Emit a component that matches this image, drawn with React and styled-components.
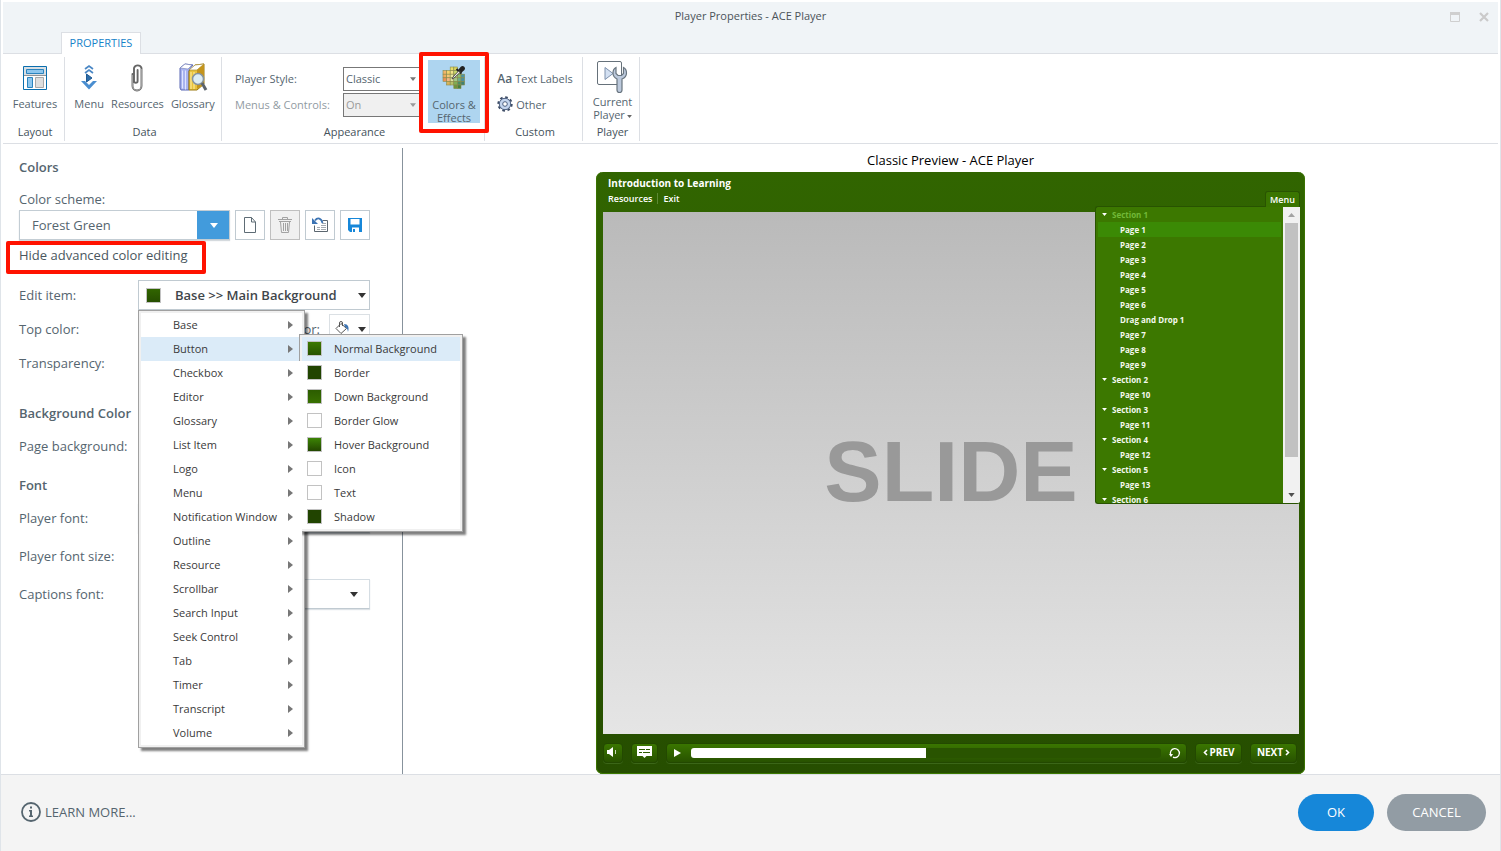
import React from "react";
import styled, { createGlobalStyle, css } from "styled-components";

const GlobalStyle = createGlobalStyle`
  * { box-sizing: border-box; }
  body { margin: 0; background: #fff; font-family: "Open Sans", "Noto Sans", sans-serif; }
  button, select, input { font: inherit; color: inherit; margin: 0; }
  button { cursor: pointer; padding: 0; border: 0; background: none; }
  ul { list-style: none; margin: 0; padding: 0; }
  svg { display: block; flex: none; }
`;

const line = "#dcdfe4";
const slate = "#55656f";

const Window = styled.div`
  min-height: 100vh;
  display: flex;
  flex-direction: column;
  border: solid #dfe4e9;
  border-width: 0 1px;
  color: ${slate};
  font-size: 13px;
`;

/* ---------- title bar and tabs ---------- */
const Header = styled.header`
  margin: 2px 2px 0;
  background: #f0f4f7;
  border-bottom: 1px solid ${line};
`;
const TitleBar = styled.div`
  display: grid;
  grid-template-columns: 1fr auto 1fr;
  align-items: center;
  height: 30px;
  padding: 0 9px;
`;
const WindowTitle = styled.h1`
  grid-column: 2;
  margin: 0;
  padding-bottom: 3px;
  font-size: 11px;
  font-weight: 400;
  color: #4b5359;
`;
const WindowButtons = styled.div`
  display: flex;
  justify-content: flex-end;
  gap: 19px;
`;
const Tabs = styled.nav`
  padding-left: 58px;
  display: flex;
`;
const Tab = styled.button`
  height: 22px;
  width: 80px;
  margin-bottom: -1px;
  padding-bottom: 2px;
  background: #fff;
  border: 1px solid ${line};
  border-bottom: 0;
  font-size: 11px;
  color: #1583c9;
`;

/* ---------- ribbon ---------- */
const Ribbon = styled.section`
  display: flex;
  margin: 0 2px;
  padding: 3px 0 2px;
  height: 90px;
  border-bottom: 1px solid ${line};
  font-size: 11px;
`;
const GroupBox = styled.div`
  display: flex;
  flex-direction: column;
  width: ${(p) => p.$width}px;
  padding-left: 3px;
  border-right: 1px solid ${line};
`;
const GroupTools = styled.div`
  flex: 1;
  display: flex;
  justify-content: ${(p) => p.$align || "center"};
  gap: ${(p) => p.$gap || 0}px;
  padding-top: 4px;
`;
const GroupName = styled.div`
  height: 18px;
  line-height: 18px;
  text-align: center;
  color: #45525b;
`;
const Tool = styled.button`
  display: flex;
  flex-direction: column;
  align-items: center;
  justify-content: flex-start;
  gap: ${(p) => (p.$twoLine ? 0 : 2)}px;
  padding: 0 2px;
  line-height: ${(p) => (p.$twoLine ? 13 : 18)}px;
`;
const ColorsTool = styled(Tool)`
  width: 52px;
  height: 63px;
  background: #aed5f0;
  line-height: 13px;
`;
const RedBox = styled.div`
  position: absolute;
  border: 4px solid #ff1200;
  border-radius: 2px;
  pointer-events: none;
`;
const ColorsSlot = styled.div`
  position: relative;
  z-index: 1;
  width: 64px;
  margin: -4px 0 0 -1px;
  padding: 3px 0 0 8px;
  ${RedBox} { left: -1px; top: -5px; width: 70px; height: 81px; }
`;
const StyleGrid = styled.div`
  display: grid;
  grid-template-columns: 108px 78px;
  grid-auto-rows: 24px;
  row-gap: 2px;
  padding-top: 6px;
  align-items: center;
`;
const StyleLabel = styled.label`
  padding-bottom: 1px;
  opacity: ${(p) => (p.$dim ? 0.65 : 1)};
`;
const RibbonSelect = styled.select`
  appearance: none;
  width: 100%;
  height: 24px;
  padding: 0 2px 1px;
  border: 1px solid #777;
  border-radius: 0;
  background: #fff;
  opacity: 1;
  &:disabled { background: #f0f0f0; color: #9a9a9a; }
`;
const SelectWrap = styled.div`
  position: relative;
  width: ${(p) => p.$width || "100%"};
  > svg { position: absolute; right: ${(p) => p.$inset || 5}px; top: calc(50% - 2px); pointer-events: none; }
`;
const CustomTools = styled.div`
  display: flex;
  flex-direction: column;
  padding-top: 7px;
  gap: 6px;
`;
const InlineTool = styled.button`
  display: flex;
  align-items: center;
  gap: 3px;
  height: 20px;
`;
const Aa = styled.b`
  font-size: 12px;
  font-weight: 600;
`;
const WithCaret = styled.span`
  display: flex;
  align-items: center;
  gap: 2px;
  > svg { margin-top: 4px; }
`;

/* ---------- main area ---------- */
const Main = styled.main`
  flex: 1;
  display: flex;
`;
const Side = styled.section`
  width: 402px;
  flex: none;
  margin-top: 4px;
  padding: 9px 32px 0 18px;
  border-right: 1px solid #87929c;
`;
const Heading = styled.h2`
  margin: 0;
  height: 20px;
  line-height: 20px;
  font-size: 13px;
  font-weight: 600;
  margin-bottom: ${(p) => p.$after}px;
`;
const FieldLabel = styled.label`
  display: block;
  height: 21px;
  line-height: 20px;
`;
const SchemeRow = styled.div`
  display: flex;
  gap: 5px;
`;
const SchemeSelect = styled.select`
  appearance: none;
  width: 100%;
  height: 30px;
  padding: 0 12px;
  border: 1px solid #c3cdd4;
  border-radius: 0;
  background: linear-gradient(to right, transparent calc(100% - 32px), #429bdc calc(100% - 32px)) #fff;
  box-shadow: 0 1px 1px #d5dade;
`;
const SquareButton = styled.button`
  width: 30px;
  height: 30px;
  display: grid;
  place-items: center;
  border: 1px solid #c0cad1;
  background: #fff;
  &:disabled { background: #f0f0f0; border-color: #bfbfbf; }
`;
const LinkBox = styled.div`
  position: relative;
  height: 30px;
  line-height: 30px;
  margin-bottom: 10px;
  ${RedBox} { left: -13px; top: 1px; width: 200px; height: 33px; }
  a { color: #4a565e; text-decoration: none; }
`;
const Row = styled.div`
  position: relative;
  display: flex;
  align-items: center;
  height: 30px;
  margin-bottom: ${(p) => p.$after || 4}px;
`;
const RowLabel = styled.label`
  width: 119px;
  flex: none;
`;
const ItemButton = styled.button`
  flex: 1;
  height: 30px;
  display: flex;
  align-items: center;
  gap: 14px;
  padding: 0 3px 0 7px;
  border: 1px solid #c0cad1;
  background: #fff;
  color: #3f464b;
  font-weight: 600;
  > svg { margin-left: auto; }
`;
const Swatch = styled.span`
  width: 15px;
  height: 15px;
  flex: none;
  border: 1px solid #c2c2c2;
  background: ${(p) => p.$fill};
`;
const FillButton = styled.button`
  width: 41px;
  height: 30px;
  display: flex;
  align-items: center;
  gap: 7px;
  padding-left: 3px;
  border: 1px solid #dbe0e4;
  background: #fff;
`;
const EndLabel = styled.label`
  margin: 0 9px 0 auto;
`;
const Field = styled.input`
  width: ${(p) => p.$width}px;
  height: 30px;
  border: 1px solid #dbe0e4;
  background: #fff;
`;
const FontSelect = styled.select`
  appearance: none;
  width: 100%;
  height: 30px;
  border: 1px solid #d5dde3;
  border-bottom-color: #c0cad1;
  border-radius: 0;
  background: #fff;
  box-shadow: 0 1px 1px #dde2e6;
`;

/* ---------- menus ---------- */
const menuBox = css`
  position: absolute;
  padding: 2px;
  border: 1px solid #a0a0a0;
  background: #f0f0f0;
  box-shadow: 3px 3px 2px rgba(0, 0, 0, 0.5);
`;
const Menu = styled.ul`
  ${menuBox}
  left: 119px;
  top: 30px;
  width: 167px;
  z-index: 3;
`;
const SubMenu = styled.ul`
  ${menuBox}
  left: calc(100% - 3px);
  top: -3px;
  width: 164px;
`;
const MenuItem = styled.li`
  position: relative;
  background: ${(p) => (p.$active ? "#dbebf8" : "#fff")};
`;
const MenuButton = styled.button`
  width: 100%;
  height: 24px;
  display: flex;
  align-items: center;
  padding: 0 9px 1px ${(p) => (p.$swatch ? 5 : 32)}px;
  gap: 12px;
  font-size: 11px;
  color: #3a3a3a;
  white-space: nowrap;
  > svg { margin-left: auto; }
`;
const MenuText = styled.span`
  margin-right: ${(p) => (p.$tight ? -8 : 0)}px;
`;

/* ---------- preview ---------- */
const Preview = styled.section`
  flex: 1;
  display: flex;
  flex-direction: column;
  align-items: center;
  padding: 6px 2px 0 0;
`;
const PreviewTitle = styled.h2`
  margin: 0;
  height: 22px;
  line-height: 20px;
  font-size: 13px;
  font-weight: 400;
  color: #000;
`;
const Player = styled.div`
  position: relative;
  width: 100%;
  max-width: 709px;
  flex: 1;
  display: flex;
  flex-direction: column;
  padding: 0 6px 0 7px;
  border-radius: 7px;
  background: linear-gradient(#316500, #264e00);
  box-shadow: inset 0 -1px 0 #3c7900, inset 1px 0 0 #3a7200, inset -1px 0 0 #3a7200;
  color: #fff;
  font-weight: 600;
  font-size: 9px;
`;
const PlayerTop = styled.div`
  height: 40px;
  padding: 4px 5px;
`;
const CourseTitle = styled.div`
  font-size: 10px;
  font-weight: 700;
  line-height: 15px;
`;
const TopLinks = styled.div`
  display: flex;
  line-height: 15px;
  button + button { margin-left: 5px; padding-left: 5px; border-left: 1px solid #5d8a35; line-height: 11px; height: 11px; margin-top: 2px; }
`;
const Slide = styled.div`
  flex: 1;
  display: grid;
  place-items: center;
  padding-bottom: 4px;
  background: linear-gradient(#bababa, #e5e5e5);
  color: #999;
  font: 700 86px/1 "Liberation Sans", Arial, sans-serif;
`;
const Controls = styled.div`
  height: 40px;
  display: flex;
  align-items: center;
  gap: 8px;
  padding: 0 2px 2px 0;
`;
const controlSkin = css`
  height: 20px;
  border-radius: 4px;
  border: 1px solid #234900;
  background: linear-gradient(#3a7600, #285200);
  box-shadow: 0 1px 0 #3b6618;
`;
const ControlButton = styled.button`
  ${controlSkin}
  width: ${(p) => p.$width}px;
  display: flex;
  align-items: center;
  justify-content: center;
  gap: 2px;
  padding-bottom: 2px;
  font-size: 10px;
  font-weight: 700;
`;
const SeekGroup = styled.div`
  ${controlSkin}
  flex: 1;
  display: flex;
  align-items: center;
  padding: 0 5px;
  gap: 8px;
`;
const Seek = styled.input`
  appearance: none;
  flex: 1;
  min-width: 0;
  height: 10px;
  border-radius: 3px;
  background: linear-gradient(to right, #fff 50%, #295400 50%);
  &::-webkit-slider-thumb { appearance: none; width: 1px; height: 10px; }
`;
const MenuDock = styled.div`
  position: absolute;
  top: 19px;
  right: 5px;
  width: 205px;
  display: flex;
  flex-direction: column;
  align-items: flex-end;
`;
const MenuTab = styled.button`
  width: 35px;
  height: 16px;
  margin-bottom: -1px;
  line-height: 13px;
  z-index: 1;
  background: #3a7500;
  border: 1px solid #295400;
  border-bottom: 0;
  border-radius: 3px 3px 0 0;
`;
const Outline = styled.div`
  width: 100%;
  height: 298px;
  display: flex;
  overflow: hidden;
  background: #3c7800;
  border: 1px solid #285300;
  border-right: 0;
  border-radius: 3px 0 3px 3px;
  font-size: 8px;
  font-weight: 700;
`;
const OutlineList = styled.ul`
  flex: 1;
  padding: 0 2px 0 2px;
`;
const OutlineRow = styled.li`
  display: flex;
  align-items: center;
  gap: 5px;
  height: 15px;
  padding: 0 0 1px ${(p) => (p.$page ? 22 : 4)}px;
  background: ${(p) => (p.$current ? "#3b8a05" : "none")};
  color: ${(p) => (p.$seen ? "#72b838" : "#f4f8ef")};
`;
const ScrollBar = styled.div`
  width: 17px;
  display: flex;
  flex-direction: column;
  align-items: center;
  background: #f1f1f1;
  padding: 6px 0;
`;
const ScrollThumb = styled.div`
  width: 13px;
  height: 234px;
  margin: 6px 0 auto;
  background: #c1c1c1;
`;

/* ---------- footer ---------- */
const Footer = styled.footer`
  height: 77px;
  display: flex;
  align-items: center;
  gap: 13px;
  padding: 0 14px 2px 20px;
  border-top: 1px solid ${line};
  background: #f4f4f4;
`;
const LearnMore = styled.a`
  display: flex;
  align-items: center;
  gap: 4px;
  margin-right: auto;
  color: ${slate};
  text-decoration: none;
`;
const Pill = styled.button`
  width: ${(p) => p.$width}px;
  height: 37px;
  border-radius: 19px;
  background: ${(p) => (p.$primary ? "#1687d9" : "#929ca4")};
  color: #fff;
`;

/* ---------- drawings ---------- */
const Down = ({ w = 8, h = 5, color = "#333" }) => (
  <svg width={w} height={h} viewBox="0 0 8 5"><path d="M0 0h8L4 5z" fill={color} /></svg>
);
const Right = () => (
  <svg width="5" height="8" viewBox="0 0 5 8"><path d="M0 0l5 4-5 4z" fill="#777" /></svg>
);
const FeaturesIcon = () => (
  <svg width="32" height="32" viewBox="0 0 32 32">
    <path d="M4.500 5.500h23v23h-23z" fill="#fff" stroke="#0a6eae" />
    <path d="M5 6h22v8H5z" fill="#d9dfe4" />
    <path d="M7.500 8.500h17v4h-17zM8.500 16.500h5v10h-5z" fill="#8dc6ee" stroke="#2b84be" />
    <path d="M16.500 16.500h8v10h-8z" fill="#dedede" stroke="#a9a9a9" />
    <path d="M5 14.500h22" stroke="#8d9398" />
  </svg>
);
const MenuIcon = () => (
  <svg width="30" height="32" viewBox="0 0 30 32" fill="none">
    <path d="M11 8l4-3 4 3M11 12l4-3 4 3" stroke="#4a87c5" strokeWidth="1.700" />
    <path d="M12.500 13v8L18 17z" fill="#2e6da8" stroke="#1f5a94" />
    <path d="M7 20h4l4 4 4-4h4l-8 8.500z" fill="#4a8ed0" />
  </svg>
);
const ClipIcon = () => (
  <svg width="30" height="32" viewBox="0 0 30 32" fill="none">
    <path d="M10.500 13v12a4.500 4.500 0 0 0 9 0V7a4 4 0 0 0-7.500 0v13a1.800 1.800 0 0 0 3.600 0V9" stroke="#666" strokeWidth="1.900" strokeLinecap="round" />
    <path d="M10.500 14v11a4.500 4.500 0 0 0 9 0V8" stroke="#b5b5b5" strokeWidth="0.700" />
  </svg>
);
const GlossaryIcon = () => (
  <svg width="32" height="32" viewBox="0 0 32 32">
    <path d="M3 7l5-4 8 1-4 5v20H4l-1-2z" fill="#a9b4f0" stroke="#5b69b5" />
    <path d="M3 7l5-4 7 1-4 4z" fill="#fff" stroke="#8089bd" strokeWidth=".7" />
    <path d="M5.500 9.500v18M8.500 9.500v19" stroke="#dfe4ff" />
    <path d="M12 10l6-6 9-1v20l-7 6h-8z" fill="#e8c23c" stroke="#9b7a12" />
    <path d="M12 9l6-5 9-1-7 6z" fill="#fff" stroke="#a7903d" strokeWidth=".7" />
    <path d="M14 11v17M17 11v17" stroke="#fff0a8" />
    <path d="M20 9l7-6v20l-7 5z" fill="#c4941c" />
    <circle cx="21" cy="18" r="5.500" fill="#dcedf6" stroke="#87949e" strokeWidth="1.500" />
    <path d="M25 22l4 7" stroke="#5b636b" strokeWidth="3" />
  </svg>
);
const PALETTE = [
  [2, 0, "#e7df69"], [3, 0, "#d7d45c"],
  [1, 1, "#f4d36c"], [2, 1, "#f1e38a"], [3, 1, "#c9d96b"], [4, 1, "#a8cb68"],
  [0, 1, "#f2b56c"], [0, 2, "#f2ac5c"], [1, 2, "#f5c777"], [2, 2, "#e9e8a0"], [3, 2, "#b4d581"], [4, 2, "#8dbf70"], [5, 2, "#4a93a5"],
  [0, 3, "#ed9158"], [1, 3, "#f3b785"], [2, 3, "#dfe0a3"], [3, 3, "#a1c987"], [4, 3, "#6cae8b"], [5, 3, "#4a8fa0"],
  [1, 4, "#d7b35b"], [2, 4, "#b9c26a"], [3, 4, "#7fae55"], [4, 4, "#4c8f62"], [5, 4, "#3f8072"],
  [3, 5, "#6b963b"], [4, 5, "#47803c"],
];
const PaletteIcon = () => (
  <svg width="32" height="36" viewBox="0 0 32 36">
    {PALETTE.map(([x, y, c]) => (
      <rect key={`${x}-${y}`} x={5 + x * 3.6} y={7 + y * 3.6} width="3.600" height="3.600" fill={c} stroke="#8a8a4a" strokeWidth=".6" />
    ))}
    <path d="M23 6.500a2.500 2.500 0 0 1 3.500 3.500l-3 2.500-3-3z" fill="#222" />
    <path d="M18.500 9l5 4.500" stroke="#222" strokeWidth="2" />
    <path d="M20.500 11l-5.500 6-1 2 2-1 6-5.500z" fill="#eee" stroke="#444" strokeWidth=".9" />
  </svg>
);
const GearIcon = () => (
  <svg width="16" height="16" viewBox="0 0 16 16">
    <circle cx="8" cy="8" r="6.700" fill="none" stroke="#3e4d66" strokeWidth="2" strokeDasharray="2.630 2.630" />
    <circle cx="8" cy="8" r="5.700" fill="#c3d4ee" stroke="#4c5f80" />
    <circle cx="8" cy="8" r="2.300" fill="#fff" stroke="#4c5f80" />
  </svg>
);
const WrenchIcon = () => (
  <svg width="34" height="34" viewBox="0 0 34 34">
    <path d="M4 0.500h21a1.500 1.500 0 0 1 1.500 1.500v20a1.500 1.500 0 0 1-1.500 1.500H4a1.500 1.500 0 0 1-1.500-1.500V2A1.500 1.500 0 0 1 4 .500z" fill="#fff" stroke="#66717a" />
    <path d="M10 6.500v12l8-6z" fill="#d3e0f2" stroke="#7e91ac" />
    <path d="M21 6.500c-2 1-3 3-3 5.500 0 3 2 5 4 6v11a2.500 2.500 0 0 0 5 0V18c2.500-1 4.500-3 4.500-6 0-2.500-1-4.500-3-5.500v6l-2 2h-3.500l-2-2z" fill="#bcc9dc" stroke="#69757f" strokeWidth="1.200" />
  </svg>
);
const PageIcon = () => (
  <svg width="14" height="18" viewBox="0 0 14 18"><path d="M1.500 1.500h7L12.500 6v10.500h-11z M8.500 1.500V6h4" fill="none" stroke="#5e6c75" /></svg>
);
const TrashIcon = () => (
  <svg width="16" height="18" viewBox="0 0 16 18" fill="none" stroke="#a2a2a2">
    <path d="M1 3.500h14M5.500 3V1.500h5V3M3.500 6l1 10.500h7l1-10.500M2 5.500h12M6.500 7v8M8.500 7v8M10.500 7v8" />
  </svg>
);
const ResetIcon = () => (
  <svg width="18" height="18" viewBox="0 0 18 18" fill="none">
    <path d="M3.500 9.500v6h13V4.500h-5" stroke="#5b666f" />
    <path d="M6 13.500h3M11 7.500h4M10 9.500h5M10 11.500h5M6 11.500h3M10 13.500h5" stroke="#a4aab0" />
    <path d="M11.500 7C10.500 2 6.500 1 4 4.500" stroke="#3c74b4" strokeWidth="1.800" />
    <path d="M1 2v6h6z" fill="#3c74b4" />
  </svg>
);
const SaveIcon = () => (
  <svg width="16" height="16" viewBox="0 0 16 16"><path d="M1 1h14v14H3l-2-2z" fill="#1687d9" /><path d="M3.500 2h9v5.500h-9zM5 10.500h7V15H5z" fill="#fff" /><path d="M6 12h2v3H6z" fill="#1687d9" /></svg>
);
const BucketIcon = () => (
  <svg width="18" height="18" viewBox="0 0 18 18">
    <path d="M3 8.500l5-5 5.500 5-5.500 5zM6.500 7V3a1.500 1.500 0 0 1 3 0v3" fill="#fff" stroke="#555" />
    <path d="M11 4c4 0 5.500 3 4 8-.5-3-1-4-3-5z" fill="#3c74b4" />
    <path d="M1 15h15v2H1z" fill="#2d6200" />
  </svg>
);
const InfoIcon = () => (
  <svg width="20" height="20" viewBox="0 0 20 20">
    <circle cx="10" cy="10" r="9" fill="none" stroke={slate} strokeWidth="1.800" />
    <path d="M9 4.500h2v2H9zM8 8h3v5.500h1V15H8v-1.500h1v-4H8z" fill={slate} />
  </svg>
);
const VolumeIcon = () => (
  <svg width="12" height="12" viewBox="0 0 12 12"><path d="M0 4h2l4-3v10L2 8H0z" fill="#fff" /><path d="M8.500 4v4" stroke="#c8d8b8" /></svg>
);
const CaptionIcon = () => (
  <svg width="15" height="12" viewBox="0 0 15 12"><path d="M0 0h15v10h-5.500l-2 2-2-2H0z" fill="#fff" /><path d="M2 3.500h6M9 3.500h4M2 6.500h3M6 6.500h7" stroke="#2d5b00" /></svg>
);
const PlayIcon = () => (
  <svg width="11" height="10" viewBox="0 0 11 10"><path d="M2 1l7 4-7 4z" fill="#fff" /></svg>
);
const ReplayIcon = () => (
  <svg width="12" height="12" viewBox="0 0 12 12" fill="none">
    <path d="M1.800 8A4.500 4.500 0 1 1 4 10.200" stroke="#fff" strokeWidth="1.300" /><path d="M0 7h4L2 10z" fill="#fff" />
  </svg>
);
const Chevron = ({ back }) => (
  <svg width="5" height="7" viewBox="0 0 5 7" fill="none"><path d={back ? "M4 1L1.500 3.500 4 6" : "M1 1l2.500 2.500L1 6"} stroke="#fff" strokeWidth="1.600" /></svg>
);
const MaximizeIcon = () => (
  <svg width="10" height="10" viewBox="0 0 10 10"><path d="M.5.500h9v9h-9z" fill="none" stroke="#cfcfcf" /><path d="M0 0h10v3H0z" fill="#cfcfcf" /></svg>
);
const CloseIcon = () => (
  <svg width="10" height="10" viewBox="0 0 10 10"><path d="M1 1l8 8M9 1L1 9" stroke="#cacaca" strokeWidth="2.200" /></svg>
);

/* ---------- content ---------- */
const MENU = ["Base", "Button", "Checkbox", "Editor", "Glossary", "List Item", "Logo", "Menu", "Notification Window", "Outline", "Resource", "Scrollbar", "Search Input", "Seek Control", "Tab", "Timer", "Transcript", "Volume"];
const SUBMENU = [
  ["Normal Background", "linear-gradient(#3c7900, #285300)"],
  ["Border", "#214400"],
  ["Down Background", "linear-gradient(#2c5d00, #387000)"],
  ["Border Glow", "#fff"],
  ["Hover Background", "linear-gradient(#3c8405, #234700)"],
  ["Icon", "#fff"],
  ["Text", "#fff"],
  ["Shadow", "#214400"],
];
const OUTLINE = ["Section 1", "Page 1", "Page 2", "Page 3", "Page 4", "Page 5", "Page 6", "Drag and Drop 1", "Page 7", "Page 8", "Page 9", "Section 2", "Page 10", "Section 3", "Page 11", "Section 4", "Page 12", "Section 5", "Page 13", "Section 6"];

const Group = ({ name, width, gap, align, children }) => (
  <GroupBox $width={width}>
    <GroupTools $gap={gap} $align={align}>{children}</GroupTools>
    <GroupName>{name}</GroupName>
  </GroupBox>
);

const EditMenu = () => (
  <Menu role="menu">
    {MENU.map((name) => (
      <MenuItem key={name} $active={name === "Button"} role="none">
        <MenuButton role="menuitem"><MenuText $tight>{name}</MenuText><Right /></MenuButton>
        {name === "Button" && (
          <SubMenu role="menu">
            {SUBMENU.map(([label, fill], i) => (
              <MenuItem key={label} $active={i === 0} role="none">
                <MenuButton role="menuitem" $swatch><Swatch $fill={fill} /><MenuText>{label}</MenuText></MenuButton>
              </MenuItem>
            ))}
          </SubMenu>
        )}
      </MenuItem>
    ))}
  </Menu>
);

export default function App() {
  return (
    <Window>
      <GlobalStyle />
      <Header>
        <TitleBar>
          <WindowTitle>Player Properties - ACE Player</WindowTitle>
          <WindowButtons>
            <button aria-label="Maximize"><MaximizeIcon /></button>
            <button aria-label="Close"><CloseIcon /></button>
          </WindowButtons>
        </TitleBar>
        <Tabs><Tab>PROPERTIES</Tab></Tabs>
      </Header>

      <Ribbon>
        <Group name="Layout" width={62}>
          <Tool><FeaturesIcon />Features</Tool>
        </Group>
        <Group name="Data" width={157} gap={3}>
          <Tool><MenuIcon />Menu</Tool>
          <Tool><ClipIcon />Resources</Tool>
          <Tool><GlossaryIcon />Glossary</Tool>
        </Group>
        <Group name="Appearance" width={263} align="flex-end">
          <StyleGrid>
            <StyleLabel htmlFor="player-style">Player Style:</StyleLabel>
            <SelectWrap>
              <RibbonSelect id="player-style"><option>Classic</option></RibbonSelect>
              <Down w={6} h={4} color="#777" />
            </SelectWrap>
            <StyleLabel htmlFor="menus-controls" $dim>Menus &amp; Controls:</StyleLabel>
            <SelectWrap>
              <RibbonSelect id="menus-controls" disabled><option>On</option></RibbonSelect>
              <Down w={6} h={4} color="#999" />
            </SelectWrap>
          </StyleGrid>
          <ColorsSlot>
            <ColorsTool><PaletteIcon /><span>Colors &amp;<br />Effects</span></ColorsTool>
            <RedBox />
          </ColorsSlot>
        </Group>
        <Group name="Custom" width={98}>
          <CustomTools>
            <InlineTool><Aa>Aa</Aa>Text Labels</InlineTool>
            <InlineTool><GearIcon />Other</InlineTool>
          </CustomTools>
        </Group>
        <Group name="Player" width={57}>
          <Tool $twoLine><WrenchIcon />Current<WithCaret>Player<Down w={5} h={3} color="#666" /></WithCaret></Tool>
        </Group>
      </Ribbon>

      <Main>
        <Side>
          <Heading $after={12}>Colors</Heading>
          <FieldLabel htmlFor="scheme">Color scheme:</FieldLabel>
          <SchemeRow>
            <SelectWrap $width="211px" $inset={12}>
              <SchemeSelect id="scheme"><option>Forest Green</option></SchemeSelect>
              <Down color="#fff" />
            </SelectWrap>
            <SquareButton aria-label="New scheme"><PageIcon /></SquareButton>
            <SquareButton aria-label="Delete scheme" disabled><TrashIcon /></SquareButton>
            <SquareButton aria-label="Reset scheme"><ResetIcon /></SquareButton>
            <SquareButton aria-label="Save scheme"><SaveIcon /></SquareButton>
          </SchemeRow>
          <LinkBox>
            <a href="#advanced">Hide advanced color editing</a>
            <RedBox />
          </LinkBox>
          <Row>
            <RowLabel htmlFor="edit-item">Edit item:</RowLabel>
            <ItemButton id="edit-item" aria-haspopup="menu">
              <Swatch $fill="linear-gradient(#316500, #264e00)" />Base &gt;&gt; Main Background<Down />
            </ItemButton>
            <EditMenu />
          </Row>
          <Row>
            <RowLabel htmlFor="top-color">Top color:</RowLabel>
            <FillButton id="top-color"><BucketIcon /><Down /></FillButton>
            <EndLabel htmlFor="bottom-color">Bottom color:</EndLabel>
            <FillButton id="bottom-color"><BucketIcon /><Down /></FillButton>
          </Row>
          <Row $after={25}>
            <RowLabel htmlFor="transparency">Transparency:</RowLabel>
            <Field id="transparency" $width={60} />
          </Row>
          <Heading $after={8}>Background Color</Heading>
          <Row $after={14}>
            <RowLabel htmlFor="page-bg">Page background:</RowLabel>
            <FillButton id="page-bg"><BucketIcon /><Down /></FillButton>
          </Row>
          <Heading $after={8}>Font</Heading>
          <Row $after={8}>
            <RowLabel htmlFor="player-font">Player font:</RowLabel>
            <SelectWrap $inset={12}>
              <FontSelect id="player-font" /><Down />
            </SelectWrap>
          </Row>
          <Row $after={8}>
            <RowLabel htmlFor="font-size">Player font size:</RowLabel>
            <Field id="font-size" $width={60} />
          </Row>
          <Row>
            <RowLabel htmlFor="captions-font">Captions font:</RowLabel>
            <SelectWrap $inset={12}>
              <FontSelect id="captions-font" /><Down />
            </SelectWrap>
          </Row>
        </Side>

        <Preview>
          <PreviewTitle>Classic Preview - ACE Player</PreviewTitle>
          <Player>
            <PlayerTop>
              <CourseTitle>Introduction to Learning</CourseTitle>
              <TopLinks><button>Resources</button><button>Exit</button></TopLinks>
            </PlayerTop>
            <Slide>SLIDE</Slide>
            <Controls>
              <ControlButton $width={20} aria-label="Volume"><VolumeIcon /></ControlButton>
              <ControlButton $width={27} aria-label="Captions"><CaptionIcon /></ControlButton>
              <SeekGroup>
                <button aria-label="Play"><PlayIcon /></button>
                <Seek type="range" aria-label="Seek" defaultValue={50} />
                <button aria-label="Replay"><ReplayIcon /></button>
              </SeekGroup>
              <ControlButton $width={47}><Chevron back />PREV</ControlButton>
              <ControlButton $width={47}>NEXT<Chevron /></ControlButton>
            </Controls>
            <MenuDock>
              <MenuTab>Menu</MenuTab>
              <Outline>
                <OutlineList>
                  {OUTLINE.map((name) => {
                    const section = name.startsWith("Section");
                    return (
                      <OutlineRow key={name} $page={!section} $seen={name === "Section 1"} $current={name === "Page 1"}>
                        {section && <Down w={5} h={3} color="#fff" />}{name}
                      </OutlineRow>
                    );
                  })}
                </OutlineList>
                <ScrollBar>
                  <svg width="7" height="4" viewBox="0 0 7 4"><path d="M0 4h7L3.500 0z" fill="#a3a3a3" /></svg>
                  <ScrollThumb />
                  <Down w={7} h={4} color="#505050" />
                </ScrollBar>
              </Outline>
            </MenuDock>
          </Player>
        </Preview>
      </Main>

      <Footer>
        <LearnMore href="#learn"><InfoIcon />LEARN MORE...</LearnMore>
        <Pill $primary $width={76}>OK</Pill>
        <Pill $width={99}>CANCEL</Pill>
      </Footer>
    </Window>
  );
}
